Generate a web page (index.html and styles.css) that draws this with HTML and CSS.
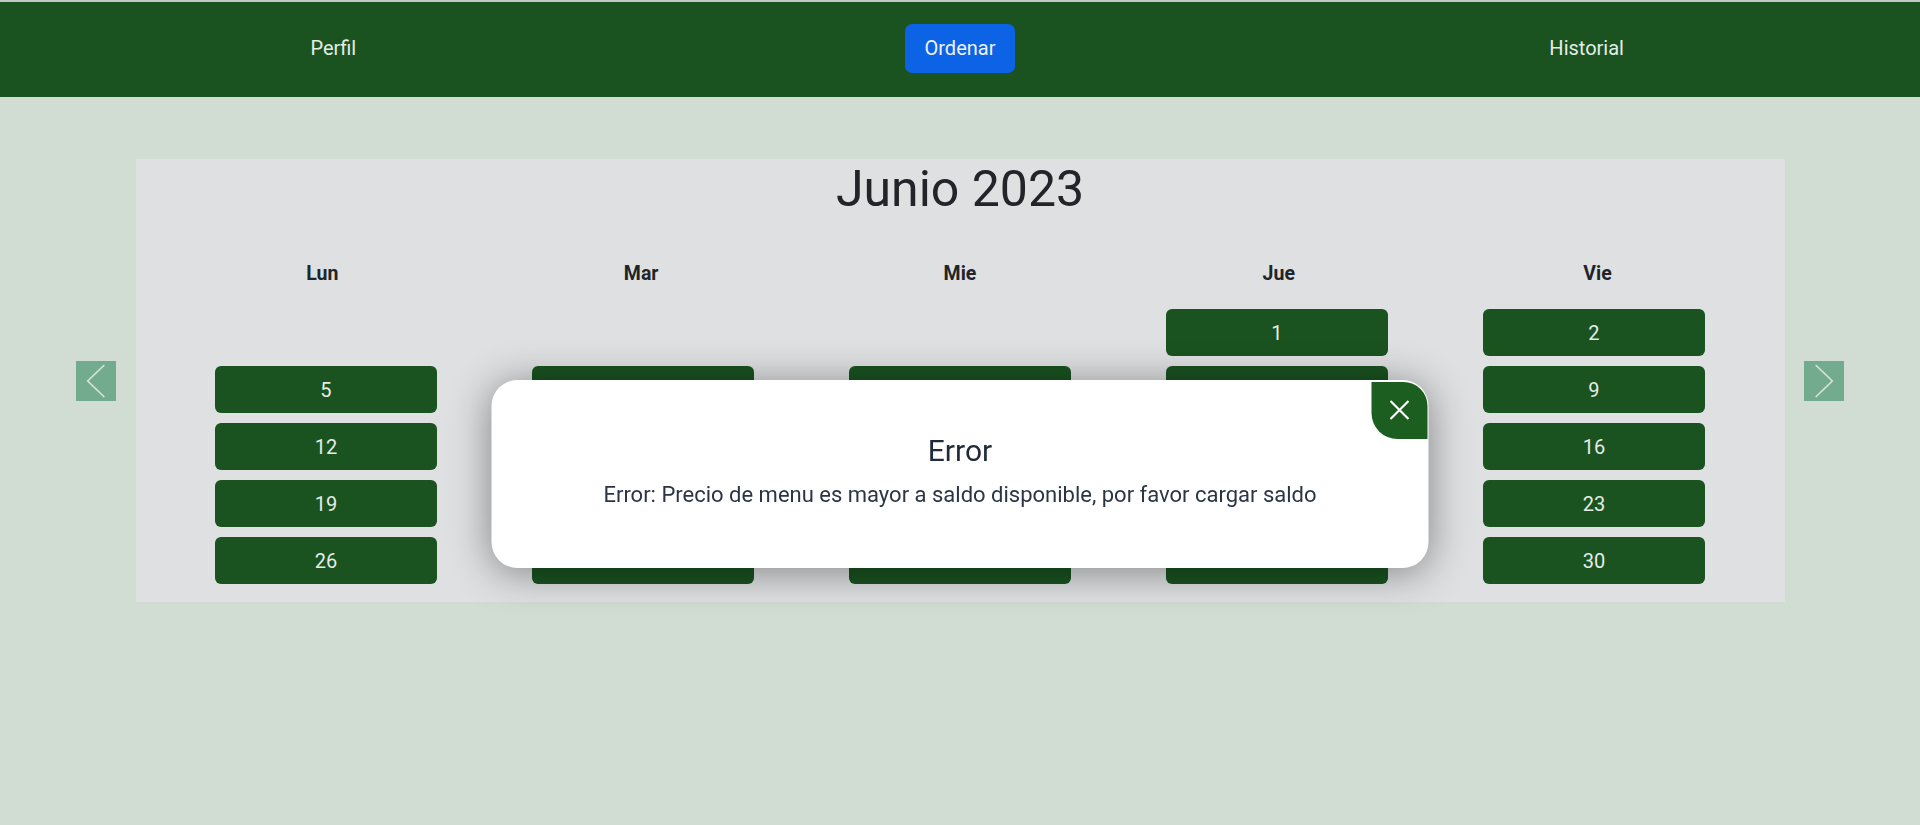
FILE: index.html
```html
<!DOCTYPE html>
<html lang="es">
<head>
<meta charset="utf-8">
<title>Ordenar</title>
<link rel="stylesheet" href="styles.css">
</head>
<body>
<nav class="topnav">
  <div class="nav-item"><a class="nav-link">Perfil</a></div>
  <div class="nav-item"><a class="nav-link active">Ordenar</a></div>
  <div class="nav-item"><a class="nav-link">Historial</a></div>
</nav>

<main class="calendar-wrap">
  <button class="arrow" aria-label="Anterior">
    <svg width="40" height="40" viewBox="0 0 40 40"><polyline points="28.3,4 11.7,20 28.3,36" fill="none" stroke="#d9e4da" stroke-width="1.6"/></svg>
  </button>

  <section class="calendar">
    <h1 class="month">Junio 2023</h1>
    <div class="weekdays">
      <div class="wd">Lun</div>
      <div class="wd">Mar</div>
      <div class="wd">Mie</div>
      <div class="wd">Jue</div>
      <div class="wd">Vie</div>
    </div>
    <div class="days">
      <div class="cell"></div><div class="cell"></div><div class="cell"></div>
      <div class="cell"><button class="day">1</button></div>
      <div class="cell"><button class="day">2</button></div>
      <div class="cell"><button class="day">5</button></div>
      <div class="cell"><button class="day">6</button></div>
      <div class="cell"><button class="day">7</button></div>
      <div class="cell"><button class="day">8</button></div>
      <div class="cell"><button class="day">9</button></div>
      <div class="cell"><button class="day">12</button></div>
      <div class="cell"><button class="day">13</button></div>
      <div class="cell"><button class="day">14</button></div>
      <div class="cell"><button class="day">15</button></div>
      <div class="cell"><button class="day">16</button></div>
      <div class="cell"><button class="day">19</button></div>
      <div class="cell"><button class="day">20</button></div>
      <div class="cell"><button class="day">21</button></div>
      <div class="cell"><button class="day">22</button></div>
      <div class="cell"><button class="day">23</button></div>
      <div class="cell"><button class="day">26</button></div>
      <div class="cell"><button class="day">27</button></div>
      <div class="cell"><button class="day">28</button></div>
      <div class="cell"><button class="day">29</button></div>
      <div class="cell"><button class="day">30</button></div>
    </div>
  </section>

  <button class="arrow" aria-label="Siguiente">
    <svg width="40" height="40" viewBox="0 0 40 40"><polyline points="11.7,4 28.3,20 11.7,36" fill="none" stroke="#d9e4da" stroke-width="1.6"/></svg>
  </button>
</main>

<div class="modal" role="dialog">
  <button class="modal-close" aria-label="Cerrar">
    <svg width="20" height="20" viewBox="0 0 20 20"><path d="M1 1 L19 19 M19 1 L1 19" stroke="#ffffff" stroke-width="2.2" fill="none"/></svg>
  </button>
  <h2 class="modal-title">Error</h2>
  <p class="modal-text">Error: Precio de menu es mayor a saldo disponible, por favor cargar saldo</p>
</div>
</body>
</html>
```

FILE: styles.css
```css
* { box-sizing: border-box; }

html, body {
  margin: 0;
  padding: 0;
}

body {
  background: #d1dcd2;
  font-family: Roboto, "Liberation Sans", Arial, sans-serif;
  color: #212529;
  border-top: 2px solid #c6c8c6;
  min-height: 825px;
}

.topnav {
  height: 95px;
  background: #1a5320;
  display: grid;
  grid-template-columns: repeat(3, 1fr);
  align-items: center;
  padding: 0 20px 3px;
}

.nav-item {
  display: flex;
  justify-content: center;
}

.nav-link {
  font-size: 20px;
  color: #e6ebe6;
  line-height: 49px;
  height: 49px;
  padding: 0 16px;
  border-radius: 7px;
}

.nav-link.active {
  background: #0d63e6;
  color: #eef2f8;
  width: 110px;
  text-align: center;
  padding: 0;
}

.calendar-wrap {
  display: flex;
  align-items: center;
  gap: 19.5px;
  padding: 0 76px;
  margin-top: 62px;
}

.arrow {
  width: 40px;
  height: 40px;
  flex: 0 0 40px;
  padding: 0;
  border: 0;
  background: #73ab8e;
  display: block;
}

.arrow svg { display: block; }

.calendar {
  flex: 1;
  background: #dfe0e2;
  padding-bottom: 18px;
}

.month {
  margin: 0;
  font-size: 50px;
  line-height: 60px;
  font-weight: 400;
  text-align: center;
  color: #212529;
}

.weekdays {
  display: grid;
  grid-template-columns: repeat(5, 1fr);
  padding: 0 27.5px;
  margin-top: 40.6px;
}

.wd {
  text-align: center;
  font-size: 19.5px;
  font-weight: 700;
  line-height: 27px;
  color: #212529;
}

.days {
  display: grid;
  grid-template-columns: repeat(5, 1fr);
  row-gap: 10px;
  padding: 0 32px;
  margin-top: 22.5px;
}

.cell {
  height: 47px;
  display: flex;
  justify-content: center;
}

.day {
  width: 70%;
  height: 47px;
  border: 0;
  border-radius: 6px;
  background: #1a5320;
  color: #e6ebe6;
  font-family: Roboto, "Liberation Sans", Arial, sans-serif;
  font-size: 20px;
  padding: 0;
}

.modal {
  position: fixed;
  top: 380px;
  left: 50%;
  transform: translateX(-50%);
  width: 937px;
  height: 188px;
  background: #ffffff;
  border-radius: 26px;
  box-shadow: 0 4px 40px rgba(0, 0, 0, 0.42);
  padding-top: 52.5px;
  text-align: center;
}

.modal-close {
  position: absolute;
  top: 2px;
  right: 1px;
  width: 56px;
  height: 57px;
  border: 0;
  padding: 0;
  background: #1b5e20;
  border-top-right-radius: 24px;
  border-bottom-left-radius: 26px;
  display: flex;
  align-items: center;
  justify-content: center;
}

.modal-close svg { display: block; margin-top: -2px; }

.modal-title {
  margin: 0;
  font-size: 30px;
  line-height: 36px;
  font-weight: 400;
  color: #1f2a3a;
}

.modal-text {
  margin: 9.7px 0 0;
  font-size: 22px;
  line-height: 33px;
  color: #2b3545;
}
```
